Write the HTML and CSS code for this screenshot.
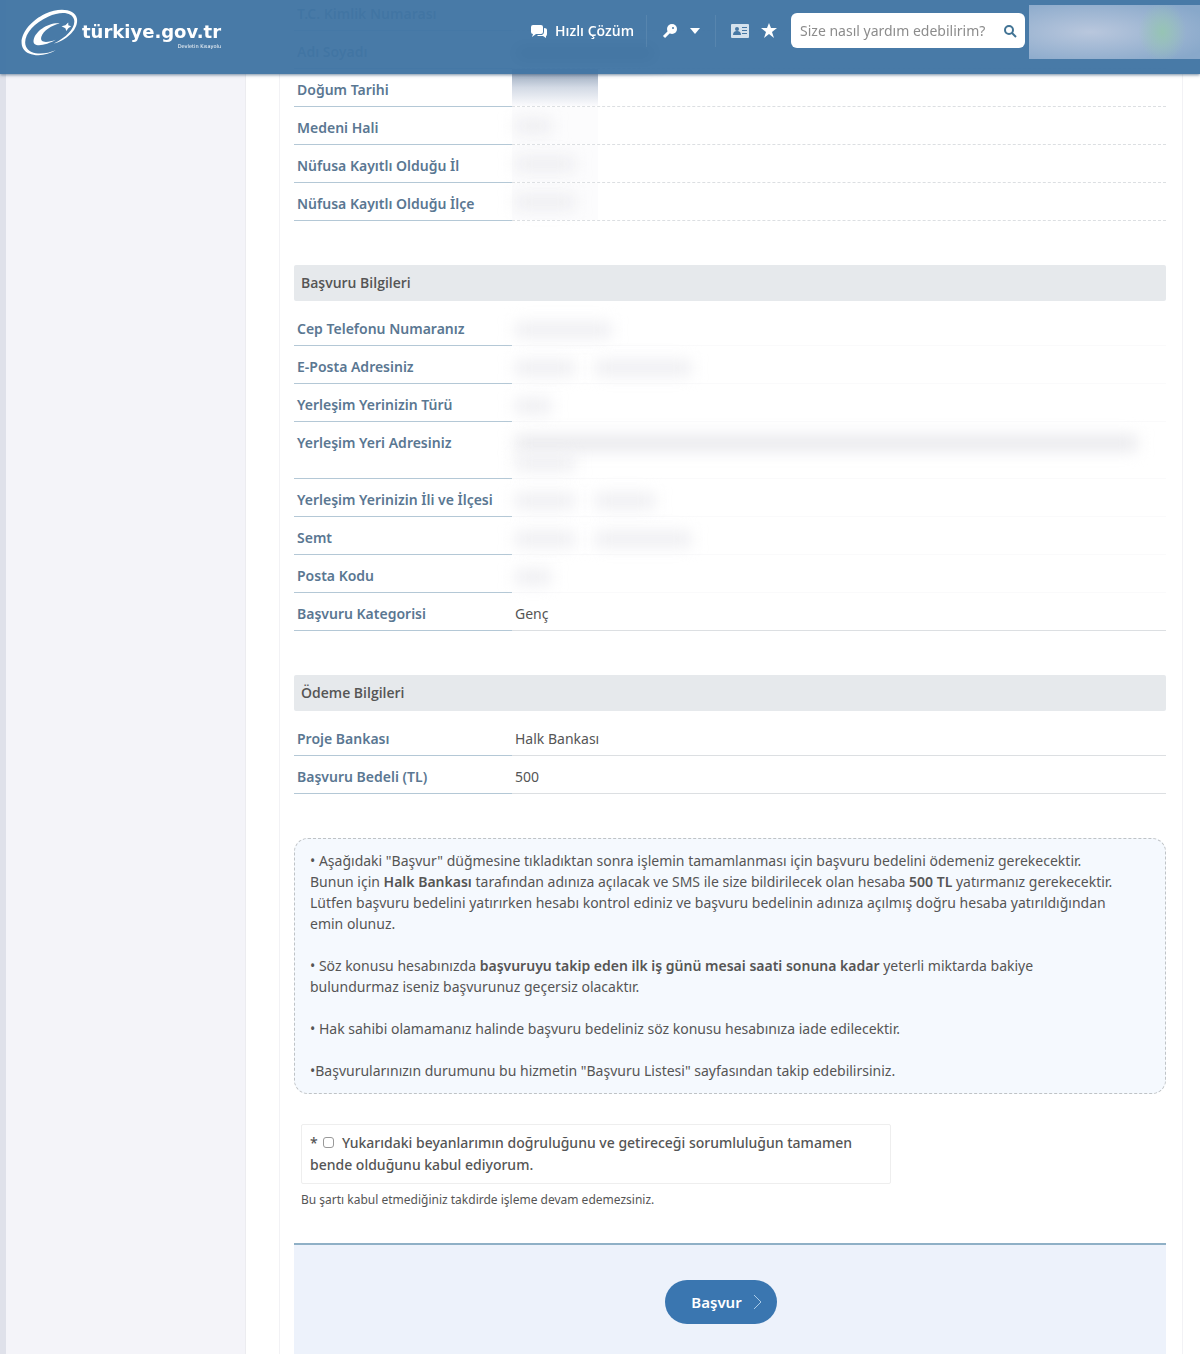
FILE: index.html
```html
<!DOCTYPE html>
<html lang="tr">

<head>
    <meta charset="UTF-8">
    <meta name="viewport" content="width=device-width, initial-scale=1.0">
    <title>Başvuru - türkiye.gov.tr</title>
    <link rel="stylesheet" href="styles.css">
</head>

<body>
    <header class="topbar">
        <a href="#" class="logo">
            <svg class="logo-mark" viewBox="0 0 64 52" aria-hidden="true">
                <path d="M38 44C27 51 9 51 4 42C-2 31 10 14 27 6C42-1 58 1 60 11C62 22 49 34 36 37C50 30 59 20 57 12C55 4 43 3 30 9C14 16 3 30 7 40C11 49 26 49 38 44Z" fill="#fff" />
                <path d="M42 16C30 15 17 24 15 33C13 42 28 39 38 33C30 36 21 37 23 30C25 23 34 18 42 16Z" fill="#fff" />
                <path d="M44 19L48 18L51 15L51 18L54 19L51 21L49 24L48 21Z" fill="#fff" />
            </svg>
            <span class="logo-text">türkiye.gov.tr<small>Devletin Kısayolu</small></span>
        </a>

        <nav class="tools">
            <a href="#" class="tool">
                <svg width="18" height="16" viewBox="0 0 18 16" aria-hidden="true">
                    <path d="M3 2h8q2 0 2 2v5q0 2-2 2H6l-4 3 1-3q-2 0-2-2V4q0-2 2-2z" fill="#fff" />
                    <path d="M14 5q3 0 3 2v4q0 2-1 2v2l-3-2H8l-1-1h5q2-1 2-3z" fill="#fff" />
                </svg>
                Hızlı Çözüm
            </a>
            <a href="#" class="tool tool-key" aria-label="Giriş">
                <svg width="16" height="16" viewBox="0 0 16 16" aria-hidden="true">
                    <circle cx="10" cy="6" r="5" fill="#fff" />
                    <path d="M8 8L2 14" stroke="#fff" stroke-width="3" />
                    <circle cx="11" cy="5" r="1" fill="#4678a5" />
                </svg>
                <svg width="10" height="6" viewBox="0 0 10 6" aria-hidden="true">
                    <path d="M0 0h10L5 6z" fill="#fff" />
                </svg>
            </a>
            <a href="#" class="tool tool-card" aria-label="Kurumlar">
                <svg width="18" height="14" viewBox="0 0 18 14" aria-hidden="true">
                    <rect width="18" height="14" rx="1" fill="#d5e2ed" />
                    <circle cx="6" cy="5" r="2" fill="#4678a5" />
                    <path d="M2 11q0-4 4-4t4 4zM11 3h5v1h-5zM11 6h5v1h-5zM11 9h5v1h-5z" fill="#4678a5" />
                </svg>
            </a>
            <a href="#" class="tool" aria-label="Favoriler">
                <svg width="16" height="15" viewBox="0 0 16 15" aria-hidden="true">
                    <path d="M8 0l2 5h6l-5 4 2 6-5-4-5 4 2-6-5-4h6z" fill="#fff" />
                </svg>
            </a>
        </nav>

        <form class="search">
            <input type="text" aria-label="Arama" placeholder="Size nasıl yardım edebilirim?">
            <button type="submit" aria-label="Ara">
                <svg width="14" height="14" viewBox="0 0 14 14" fill="none" stroke="#417394" stroke-width="2" aria-hidden="true">
                    <circle cx="6" cy="6" r="4" />
                    <path d="M9 9l4 4" />
                </svg>
            </button>
        </form>
        <div class="user"></div>
    </header>

    <div class="page">
        <aside class="sidebar"></aside>

        <main class="content">
            <table class="info info-person">
                <tr>
                    <th scope="row">T.C. Kimlik Numarası</th>
                    <td></td>
                </tr>
                <tr>
                    <th scope="row">Adı Soyadı</th>
                    <td><span class="masked masked-name"></span></td>
                </tr>
                <tr>
                    <th scope="row">Doğum Tarihi</th>
                    <td><div class="cover cover-dark"></div></td>
                </tr>
                <tr>
                    <th scope="row">Medeni Hali</th>
                    <td><div class="cover"><span class="masked masked-xs"></span></div></td>
                </tr>
                <tr>
                    <th scope="row">Nüfusa Kayıtlı Olduğu İl</th>
                    <td><div class="cover"><span class="masked masked-sm"></span></div></td>
                </tr>
                <tr>
                    <th scope="row">Nüfusa Kayıtlı Olduğu İlçe</th>
                    <td><div class="cover"><span class="masked masked-sm"></span></div></td>
                </tr>
            </table>

            <h2>Başvuru Bilgileri</h2>
            <table class="info info-application">
                <tr>
                    <th scope="row">Cep Telefonu Numaranız</th>
                    <td><span class="masked masked-md"></span></td>
                </tr>
                <tr>
                    <th scope="row">E-Posta Adresiniz</th>
                    <td><span class="masked masked-sm"></span><span class="masked masked-md"></span></td>
                </tr>
                <tr>
                    <th scope="row">Yerleşim Yerinizin Türü</th>
                    <td><span class="masked masked-xs"></span></td>
                </tr>
                <tr class="row-tall">
                    <th scope="row">Yerleşim Yeri Adresiniz</th>
                    <td><span class="masked masked-full"></span><br><span class="masked masked-sm"></span></td>
                </tr>
                <tr>
                    <th scope="row">Yerleşim Yerinizin İli ve İlçesi</th>
                    <td><span class="masked masked-sm"></span><span class="masked masked-sm"></span></td>
                </tr>
                <tr>
                    <th scope="row">Semt</th>
                    <td><span class="masked masked-sm"></span><span class="masked masked-md"></span></td>
                </tr>
                <tr>
                    <th scope="row">Posta Kodu</th>
                    <td><span class="masked masked-xs"></span></td>
                </tr>
                <tr class="row-lined">
                    <th scope="row">Başvuru Kategorisi</th>
                    <td>Genç</td>
                </tr>
            </table>

            <h2>Ödeme Bilgileri</h2>
            <table class="info">
                <tr>
                    <th scope="row">Proje Bankası</th>
                    <td>Halk Bankası</td>
                </tr>
                <tr>
                    <th scope="row">Başvuru Bedeli (TL)</th>
                    <td>500</td>
                </tr>
            </table>

            <div class="notes">
                <p>• Aşağıdaki "Başvur" düğmesine tıkladıktan sonra işlemin tamamlanması için başvuru bedelini ödemeniz gerekecektir.<br>
                    Bunun için <b>Halk Bankası</b> tarafından adınıza açılacak ve SMS ile size bildirilecek olan hesaba <b>500 TL</b> yatırmanız gerekecektir.<br>
                    Lütfen başvuru bedelini yatırırken hesabı kontrol ediniz ve başvuru bedelinin adınıza açılmış doğru hesaba yatırıldığından<br>
                    emin olunuz.</p>
                <p>• Söz konusu hesabınızda <b>başvuruyu takip eden ilk iş günü mesai saati sonuna kadar</b> yeterli miktarda bakiye<br>
                    bulundurmaz iseniz başvurunuz geçersiz olacaktır.</p>
                <p>• Hak sahibi olamamanız halinde başvuru bedeliniz söz konusu hesabınıza iade edilecektir.</p>
                <p>•Başvurularınızın durumunu bu hizmetin "Başvuru Listesi" sayfasından takip edebilirsiniz.</p>
            </div>

            <form class="apply">
                <label class="accept">* <input type="checkbox" name="accept" required> Yukarıdaki beyanlarımın doğruluğunu ve getireceği sorumluluğun tamamen bende olduğunu kabul ediyorum.</label>
                <p class="hint">Bu şartı kabul etmediğiniz takdirde işleme devam edemezsiniz.</p>
                <div class="actions">
                    <button type="submit">Başvur
                        <svg width="9" height="16" viewBox="0 0 9 16" fill="none" stroke="#a9cbe8" aria-hidden="true">
                            <path d="M1 1l7 7-7 7" />
                        </svg>
                    </button>
                </div>
            </form>
        </main>
    </div>
</body>

</html>
```

FILE: styles.css
```css
* {
    box-sizing: border-box;
}

body {
    font-family: 'Noto Sans', 'Open Sans', sans-serif;
    font-size: 14px;
    line-height: 21px;
    color: #555;
    background-color: #fff;
    margin: 0;
}

/* Header */
.topbar {
    position: fixed;
    top: 0;
    left: 0;
    right: 0;
    z-index: 10;
    height: 74px;
    display: flex;
    align-items: flex-start;
    background-color: rgba(65, 117, 163, 0.96);
    box-shadow: 0 1px 3px rgba(60, 90, 120, 0.7);
}

.logo {
    display: flex;
    align-items: center;
    margin: 8px auto 0 18px;
    color: #fff;
    text-decoration: none;
}

.logo-mark {
    width: 64px;
    height: 50px;
}

.logo-text {
    display: flex;
    flex-direction: column;
    padding-top: 4px;
    font: bold 18px/22px 'DejaVu Sans', sans-serif;
}

.logo-text small {
    font-size: 5px;
    line-height: 6px;
    font-weight: normal;
    text-align: right;
}

.tools {
    display: flex;
    align-items: center;
    height: 61px;
    margin-right: 14px;
}

.tool {
    display: flex;
    align-items: center;
    gap: 7px;
    color: #fff;
    font-family: 'Open Sans', sans-serif;
    font-weight: 600;
    text-decoration: none;
}

.tool-key {
    gap: 12px;
    margin: 0 15px 0 12px;
    padding: 8px 15px;
    border: solid rgba(255, 255, 255, 0.08);
    border-width: 0 1px;
}

.tool-card {
    margin-right: 12px;
}

.search {
    display: flex;
    align-items: center;
    width: 234px;
    height: 35px;
    margin: 13px 4px 0 0;
    padding: 0 8px;
    background-color: #fff;
    border-radius: 6px;
}

.search input {
    flex: 1;
    min-width: 0;
    padding: 0 0 0 1px;
    border: none;
    outline: none;
    background: none;
    font: inherit;
}

.search input::placeholder {
    color: #8c8c8c;
}

.search button {
    display: flex;
    padding: 0;
    border: none;
    background: none;
    cursor: pointer;
}

.user {
    width: 171px;
    height: 54px;
    margin-top: 5px;
    background: radial-gradient(24px 30px at 78% 50%, #96c4b4, transparent),
        radial-gradient(130px 36px at 36% 50%, #b9c7dd, #88a8ca);
}

/* Page */
.page {
    display: flex;
    min-height: 100vh;
}

.sidebar {
    width: 246px;
    background-color: #f4f4f9;
    border-left: 6px solid #dfe1ea;
    border-right: 1px solid #ececf0;
}

.content {
    flex: 1;
    display: flex;
    flex-direction: column;
    margin: 0 17px 0 33px;
    padding: 0 16px 0 14px;
    border: solid #f2f2f5;
    border-width: 0 1px;
}

h2 {
    margin: 44px 0 7px;
    padding: 7px;
    font-family: 'Open Sans', sans-serif;
    font-size: 14px;
    line-height: 22px;
    font-weight: 600;
    color: #555;
    background-color: #e6e9ec;
    border-radius: 2px;
}

.info {
    width: 100%;
    border-collapse: separate;
    border-spacing: 0;
    table-layout: fixed;
}

.info th,
.info td {
    height: 38px;
    padding: 10px 3px 5px;
    line-height: 22px;
    text-align: left;
    vertical-align: top;
    border-bottom: 1px solid #dcdfe2;
}

.info th {
    width: 25%;
    font-weight: 600;
    color: #5a7792;
    border-bottom-color: #b4c8d6;
}

/* the first row is half under the header */
.info-person tr:first-child > * {
    height: 31px;
    padding-top: 3px;
}

.info-person td {
    border-bottom-style: dashed;
}

.info-application td {
    border-bottom-color: #fafafb;
}

.info .row-tall > * {
    height: 57px;
}

.row-tall td {
    line-height: 20px;
}

.info .row-lined td {
    border-bottom-color: #dcdfe2;
}

/* Hidden personal data */
.masked {
    display: inline-block;
    height: 14px;
    margin-right: 20px;
    vertical-align: middle;
    background-color: #ececf0;
    filter: blur(8px);
}

.masked-xs {
    width: 36px;
}

.masked-sm {
    width: 60px;
}

.masked-md {
    width: 96px;
}

.masked-full {
    width: 96%;
    background-color: #e6e6ea;
}

.masked-name {
    width: 140px;
    background-color: #777;
}

.cover {
    width: 86px;
    height: 37px;
    margin: -10px 0 -5px -3px;
    padding: 7px 3px;
    background-color: #fcfcfd;
}

.cover-dark {
    background: linear-gradient(#a9b6c8 20%, #d3dae5 50%, #fbfbfd);
}

/* Notes */
.notes {
    margin-top: 44px;
    padding: 11px 15px 12px;
    background-color: #f5f9fe;
    border: 1px dashed #bfc3c6;
    border-radius: 14px;
}

.notes p {
    margin: 0 0 21px;
}

.notes p:last-child {
    margin-bottom: 0;
}

.notes b {
    font-weight: 600;
}

/* Apply form */
.apply {
    flex: 1;
    display: flex;
    flex-direction: column;
}

.accept {
    max-width: 590px;
    margin: 30px 7px 0;
    padding: 7px 8px;
    line-height: 22px;
    font-weight: 500;
    border: 1px solid #eee;
    border-radius: 2px;
    color: #555;
}

.accept input {
    appearance: none;
    width: 11px;
    height: 11px;
    margin: 0 4px 0 2px;
    border: 1px solid #999;
    border-radius: 3px;
}

.accept input:checked {
    background-color: #3a76b0;
}

.hint {
    margin: 6px 7px 33px;
    font-size: 12px;
    line-height: 20px;
}

.actions {
    flex: 1;
    display: flex;
    justify-content: center;
    align-items: flex-start;
    padding: 35px 18px 30px 0;
    background-color: #edf2fb;
    border-top: 2px solid #8fb0c6;
}

.actions button {
    display: flex;
    align-items: center;
    gap: 11px;
    height: 44px;
    padding: 0 15px 0 26px;
    border: none;
    border-radius: 22px;
    background-color: #3a76b0;
    color: #fff;
    font: 600 15px/22px 'Noto Sans', sans-serif;
    cursor: pointer;
}

.actions button:hover {
    background-color: #2f6499;
}
```
